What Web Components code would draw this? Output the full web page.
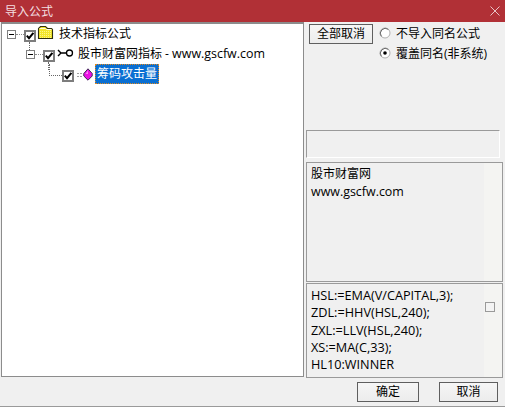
<!DOCTYPE html>
<html>
<head>
<meta charset="utf-8">
<title>导入公式</title>
<style>
    html, body { margin: 0; padding: 0; background: #f0f0f0; }
    body {
        font: 12px/20px "Open Sans", "Noto Sans CJK SC", sans-serif;
        color: #000;
    }
    .latin { font-size: 12.45px; }
</style>
</head>
<body>
<import-dialog>
    <span slot="title">导入公式</span>
    <formula-tree slot="tree">
        <tree-node level="0" expander icon="folder" line>技术指标公式</tree-node>
        <tree-node level="1" expander icon="key" line>股市财富网指标 - <span class="latin">www.gscfw.com</span></tree-node>
        <tree-node level="2" icon="gem" selected>筹码攻击量</tree-node>
    </formula-tree>
    <div slot="side">
        <option-bar></option-bar>
        <info-box kind="blank"></info-box>
        <info-box kind="desc">股市财富网<br><span class="latin">www.gscfw.com</span></info-box>
        <info-box kind="code">HSL:=EMA(V/CAPITAL,3);<br>ZDL:=HHV(HSL,240);<br>ZXL:=LLV(HSL,240);<br>XS:=MA(C,33);<br>HL10:WINNER</info-box>
    </div>
    <win-button slot="footer" w="62">确定</win-button>
    <win-button slot="footer" w="59">取消</win-button>
</import-dialog>

<script>
/** Dialog frame: title bar, tree on the left, side column, footer buttons. */
class ImportDialog extends HTMLElement {
    constructor() {
        super();
        this.attachShadow({ mode: 'open' });
        this.shadowRoot.innerHTML = `
            <style>
                :host { display: flex; flex-direction: column; width: 505px; height: 407px; box-sizing: border-box; background: #f0f0f0; border-bottom: 1px solid #9a9a9a; overflow: hidden; }
                .title { flex: none; box-sizing: border-box; height: 22px; padding: 2px 0 0 5px; background: #b13036; color: #f3dfe0; display: flex; align-items: center; justify-content: space-between; font-size: 12px; }
                .title svg { margin: -2px 5px 0 0; }
                .main { flex: none; height: 355px; display: grid; grid-template-columns: 305px 1fr; }
                .footer { flex: 1; display: flex; justify-content: flex-end; gap: 20px; padding: 5px 7px 0 0; }
                ::slotted([slot="side"]) { display: flex; flex-direction: column; min-width: 0; }
            </style>
            <div class="title">
                <slot name="title"></slot>
                <svg width="10" height="10" viewBox="0 0 10 10"><path d="M.5 .5L9.5 9.5M9.5 .5L.5 9.5" stroke="#e8c4c6" fill="none"/></svg>
            </div>
            <div class="main">
                <slot name="tree"></slot>
                <slot name="side"></slot>
            </div>
            <div class="footer"><slot name="footer"></slot></div>
        `;
    }
}

/** White tree pane. */
class FormulaTree extends HTMLElement {
    constructor() {
        super();
        this.attachShadow({ mode: 'open' });
        this.shadowRoot.innerHTML = `
            <style>
                :host { display: block; box-sizing: border-box; margin-left: 1px; width: 303px; height: 355px; background: #fff; border: 1px solid #8c8c8c; border-width: 2px 1px 1px 1px; }
            </style>
            <slot></slot>
        `;
    }
}

const TREE_ICONS = {
    folder: `<path d="M2.5 14.5V4.5L4.5 2.5H9.5L11.5 4.5H15.5L16.5 5.5V14.5Z" fill="#f3e62a" stroke="#30300f" stroke-width="1.1"/>
        <path d="M4 7.5H15M4 9.5H15M4 11.5H15M4 13.5H15" stroke="#fbf68c" stroke-dasharray="1 1"/><path d="M3.5 4.5H9.5L10.5 5.5H15.5" fill="none" stroke="#fffde0"/>`,
    key: `<path d="M3 6L6 9H11M3 12L6 9" fill="none" stroke="#000" stroke-width="1.4"/><circle cx="14.5" cy="9" r="3" fill="#fff" stroke="#000" stroke-width="1.3"/>`,
    gem: `<path d="M3 9.5H9M3 12.5H9" stroke="#a0a0a0" stroke-width="1.2" stroke-dasharray="2 1"/><path d="M14 4.8L18.2 9.5V12L14 16.2L9.8 12V9.5Z" fill="#ec10e4" stroke="#3e2a58"/><path d="M14 6.5L11.5 10H14Z" fill="#ff80f6"/>`
};

/** One row of the tree: expander, checkbox, icon and label. */
class TreeNode extends HTMLElement {
    constructor() {
        super();
        this.attachShadow({ mode: 'open' });
    }

    connectedCallback() {
        const level = Number(this.getAttribute('level'));
        const lead = this.hasAttribute('expander')
            ? `<span class="exp"><i></i></span><span class="lead"></span>`
            : `<span class="elbow"></span>`;
        this.shadowRoot.innerHTML = `
            <style>
                :host { display: flex; height: 20px; box-sizing: border-box; padding-left: ${5 + 19 * level}px; font-size: 12px; line-height: 20px; white-space: nowrap; }
                .exp { flex: none; box-sizing: border-box; width: 9px; height: 9px; margin-top: 6px; border: 1px solid #808080; background: #fff; display: flex; align-items: center; justify-content: center; }
                .exp i { display: block; width: 5px; height: 1px; background: #000; }
                .lead { flex: none; width: 8px; height: 0; margin-top: 10px; border-top: 1px dotted #888; }
                .elbow { flex: none; box-sizing: border-box; width: 17px; height: 12px; margin-left: 4px; margin-right: -4px; border-left: 1px dotted #666; border-bottom: 1px dotted #666; }
                .check { flex: none; position: relative; box-sizing: border-box; width: 12px; height: 12px; margin-top: 6px; border: 2px solid #7d7d7d; background: #fff; }
                .check svg { display: block; }
                .line::after { content: ""; position: absolute; left: 3px; top: 10px; height: 8px; border-left: 1px dotted #666; }
                .icon { flex: none; width: 23px; height: 20px; }
                .text { height: 20px; }
                .sel { margin-left: -2px; padding: 0 1px; height: 18px; line-height: 18px; background: #0a6fd2; color: #fff; border: 1px dotted #e08a20; }
            </style>
            ${lead}
            <span class="check ${this.hasAttribute('line') ? 'line' : ''}">
                <svg width="8" height="8" viewBox="0 0 8 8"><path d="M.8 3.6L3 6.2L7.4 .8" fill="none" stroke="#000" stroke-width="2"/></svg>
            </span>
            <svg class="icon" viewBox="0 0 23 20">${TREE_ICONS[this.getAttribute('icon')]}</svg>
            <span class="text ${this.hasAttribute('selected') ? 'sel' : ''}"><slot></slot></span>
        `;
    }
}

/** Top of the side column: toggle button and the two radios. */
class OptionBar extends HTMLElement {
    constructor() {
        super();
        this.attachShadow({ mode: 'open' });
        this.shadowRoot.innerHTML = `
            <style>
                :host { display: flex; flex: none; height: 108px; box-sizing: border-box; padding: 2px 0 0 4px; gap: 6px; }
                .radios { display: flex; flex-direction: column; }
            </style>
            <win-button w="64">全部取消</win-button>
            <div class="radios">
                <win-radio>不导入同名公式</win-radio>
                <win-radio checked>覆盖同名(非系统)</win-radio>
            </div>
        `;
    }
}

/** Radio with a label. */
class WinRadio extends HTMLElement {
    constructor() {
        super();
        this.attachShadow({ mode: 'open' });
    }

    connectedCallback() {
        const dot = this.hasAttribute('checked') ? '<circle cx="6" cy="6" r="1.8" fill="#000"/>' : '';
        this.shadowRoot.innerHTML = `
            <style>
                :host { display: flex; align-items: center; gap: 5px; height: 20px; white-space: nowrap; font-size: 12px; }
                svg { flex: none; margin-top: -3px; }
            </style>
            <svg width="12" height="12" viewBox="0 0 12 12"><circle cx="6" cy="6" r="5" fill="#fff" stroke="#b0b0b0"/><path d="M2.4 9.4A5 5 0 0 1 9.4 2.4" fill="none" stroke="#6a6a6a"/>${dot}</svg>
            <span><slot></slot></span>
        `;
    }
}

/** Plain bordered Windows style button. */
class WinButton extends HTMLElement {
    constructor() {
        super();
        this.attachShadow({ mode: 'open' });
    }

    connectedCallback() {
        this.shadowRoot.innerHTML = `
            <style>
                :host { display: flex; flex: none; align-items: center; justify-content: center; box-sizing: border-box; width: ${this.getAttribute('w')}px; height: 20px; border: 1px solid #5f5f5f; background: linear-gradient(#f6f6f6, #ececec); font-size: 12px; }
            </style>
            <slot></slot>
        `;
    }
}

/** Sunken boxes of the side column. */
class InfoBox extends HTMLElement {
    constructor() {
        super();
        this.attachShadow({ mode: 'open' });
    }

    connectedCallback() {
        const sizes = {
            blank: 'height: 28px; width: 194px; border-bottom-color: #fff; border-right-color: #fff; line-height: 18px;',
            desc: 'height: 120px; width: 197px; margin-top: 4px; padding: 2px 0 0 4px; line-height: 18px; background: linear-gradient(90deg, #f0f0f0 177px, #f4f4f2 177px);',
            code: 'height: 95px; width: 197px; margin-top: 1px; padding: 3px 0 0 4px; line-height: 17.3px; font-size: 12.7px; background: linear-gradient(90deg, #f0f0f0 177px, #f4f4f2 177px);'
        };
        const kind = this.getAttribute('kind');
        this.shadowRoot.innerHTML = `
            <style>
                :host { display: block; flex: none; position: relative; box-sizing: border-box; margin-left: 1px; border: 1px solid #9a9a9a; font-size: 12px; ${sizes[kind]} }
                .scroll { position: absolute; right: 7px; top: 18px; box-sizing: border-box; width: 10px; height: 10px; border: 1px solid #9a9a9a; background: #f4f4f4; }
            </style>
            <slot></slot>
            ${kind === 'code' ? '<span class="scroll"></span>' : ''}
        `;
    }
}

customElements.define('import-dialog', ImportDialog);
customElements.define('formula-tree', FormulaTree);
customElements.define('tree-node', TreeNode);
customElements.define('option-bar', OptionBar);
customElements.define('win-radio', WinRadio);
customElements.define('win-button', WinButton);
customElements.define('info-box', InfoBox);
</script>
</body>
</html>
